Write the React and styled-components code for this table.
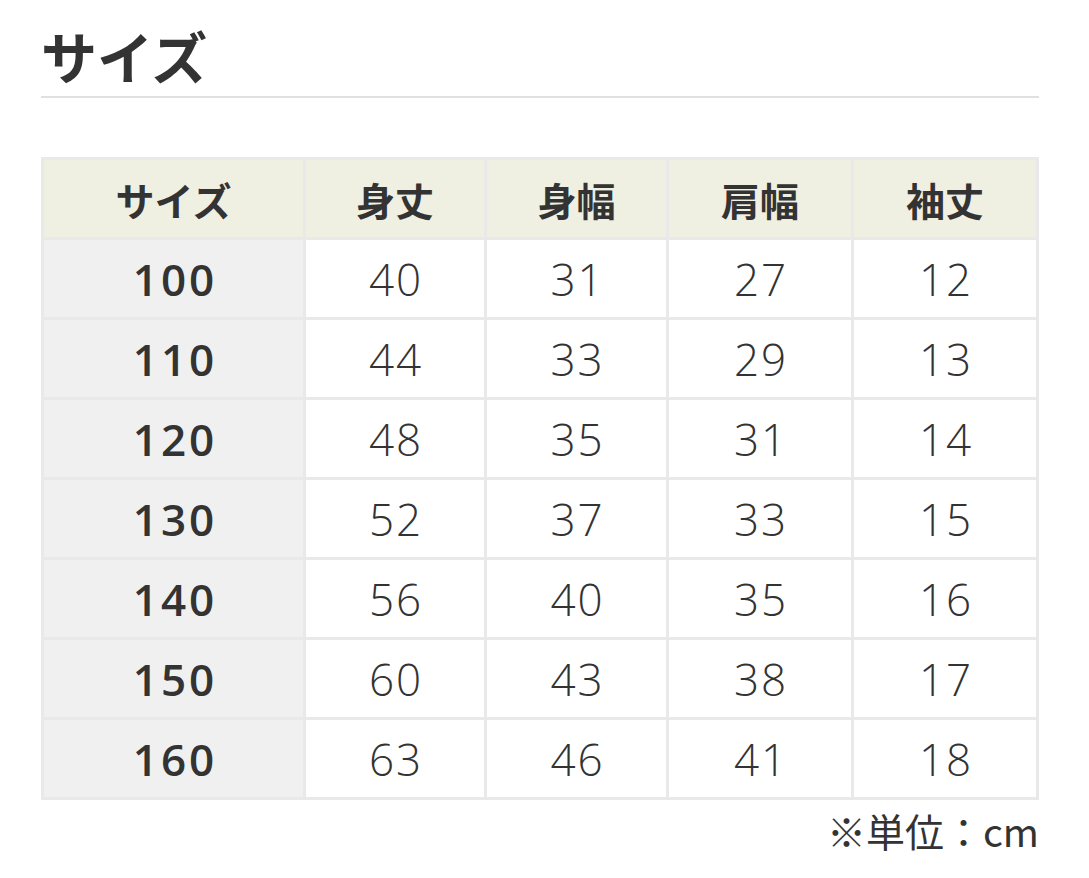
import React from "react";
import { styled, createGlobalStyle } from "styled-components";

const GlobalStyle = createGlobalStyle`
  body {
    margin: 0;
    background: #fff;
    color: #333;
    font-family: "Noto Sans CJK JP", "Noto Sans", sans-serif;
  }
`;

const columns = [
  { label: "サイズ", width: 259 },
  { label: "身丈", width: 178 },
  { label: "身幅", width: 179 },
  { label: "肩幅", width: 182 },
  { label: "袖丈", width: 182 },
];

const rows = [
  ["100", 40, 31, 27, 12],
  ["110", 44, 33, 29, 13],
  ["120", 48, 35, 31, 14],
  ["130", 52, 37, 33, 15],
  ["140", 56, 40, 35, 16],
  ["150", 60, 43, 38, 17],
  ["160", 63, 46, 41, 18],
];

const App = () => {
  return (
    <>
      <GlobalStyle />
      <Page>
        <Title>サイズ</Title>
        <Table>
          <colgroup>
            {columns.map((c) => (
              <col key={c.label} style={{ width: c.width }} />
            ))}
          </colgroup>
          <thead>
            <tr>
              {columns.map((c) => (
                <HeadCell key={c.label}>{c.label}</HeadCell>
              ))}
            </tr>
          </thead>
          <tbody>
            {rows.map(([size, ...values]) => (
              <tr key={size}>
                <SizeCell>{size}</SizeCell>
                {values.map((v, i) => (
                  <ValueCell key={i}>{v}</ValueCell>
                ))}
              </tr>
            ))}
          </tbody>
        </Table>
        <Note>※単位：cm</Note>
      </Page>
    </>
  );
};

export default App;

const Page = styled.div`
  width: 998px;
  padding: 20px 0 0 41px;
`;

const Title = styled.h2`
  margin: 0;
  font-size: 56px;
  font-weight: 700;
  line-height: 70px;
  color: #333;
  padding-bottom: 6px;
  border-bottom: 2px solid #e0e0e0;
`;

const Table = styled.table`
  margin-top: 59px;
  width: 998px;
  table-layout: fixed;
  border-collapse: separate;
  border-spacing: 3px;
  background: #e9e9e9;
`;

const Cell = styled.td`
  height: 77px;
  padding: 0;
  text-align: center;
  vertical-align: middle;
  color: #333;
`;

const HeadCell = styled(Cell).attrs({ as: "th" })`
  background: #efefe2;
  font-size: 39px;
  font-weight: 700;
`;

const SizeCell = styled(Cell)`
  background: #f0f0f0;
  font-family: "Open Sans", "Noto Sans", sans-serif;
  font-size: 44px;
  font-weight: 600;
  letter-spacing: 3px;
  text-indent: 3px;
`;

const ValueCell = styled(Cell)`
  background: #fff;
  font-family: "Open Sans", "Noto Sans", sans-serif;
  font-size: 44px;
  font-weight: 300;
  letter-spacing: 2px;
  text-indent: 2px;
`;

const Note = styled.div`
  margin-top: 5px;
  text-align: right;
  font-size: 39px;
  line-height: 50px;
  color: #333;
`;
